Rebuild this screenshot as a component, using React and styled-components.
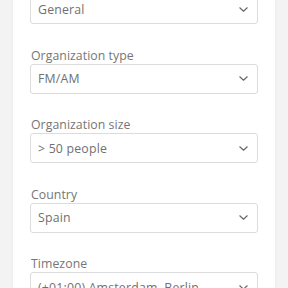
import React from "react";
import styled, { createGlobalStyle } from "styled-components";

const Global = createGlobalStyle`
  html, body { margin: 0; padding: 0; background: #f3f3f3; overflow: hidden; }
  body { font-family: "Open Sans", "Liberation Sans", sans-serif; }
`;

const Page = styled.div`
  display: flex;
  height: 288px;
  overflow: hidden;
`;

const Card = styled.div`
  margin-left: 13px;
  width: 262px;
  flex: none;
  background: #fff;
  box-shadow: 0 0 3px rgba(0, 0, 0, 0.05);
  padding: 0 17px;
  box-sizing: border-box;
  margin-top: -6px;
`;

const Field = styled.div`
  display: flex;
  flex-direction: column;
  margin-bottom: 23.5px;
`;

const Label = styled.label`
  font-size: 12.3px;
  line-height: 16px;
  color: #767676;
  letter-spacing: 0.05px;
  padding-left: 1px;
`;

const SelectBox = styled.div`
  height: 30px;
  box-sizing: border-box;
  border: 1px solid #dcdcdc;
  border-radius: 3px;
  display: flex;
  align-items: center;
  justify-content: space-between;
  padding: 0 9px 0 7px;
  font-size: 12.3px;
  color: #707070;
  letter-spacing: 0.2px;
  white-space: nowrap;
  overflow: hidden;
`;

const Chevron = () => (
  <svg width="9" height="5" viewBox="0 0 9 5" fill="none">
    <path d="M0.8 0.8l3.7 3.4 3.7-3.4" stroke="#6a6a6a" strokeWidth="1.2" strokeLinecap="round" strokeLinejoin="round" />
  </svg>
);

const fields = [
  [null, "General"],
  ["Organization type", "FM/AM"],
  ["Organization size", "> 50 people"],
  ["Country", "Spain"],
  ["Timezone", "(+01:00) Amsterdam, Berlin"],
];

export default function App() {
  return (
    <>
      <Global />
      <Page>
        <Card>
          {fields.map(([l, v]) => (
            <Field key={v}>
              {l && <Label>{l}</Label>}
              <SelectBox>
                <span>{v}</span>
                <Chevron />
              </SelectBox>
            </Field>
          ))}
        </Card>
      </Page>
    </>
  );
}
